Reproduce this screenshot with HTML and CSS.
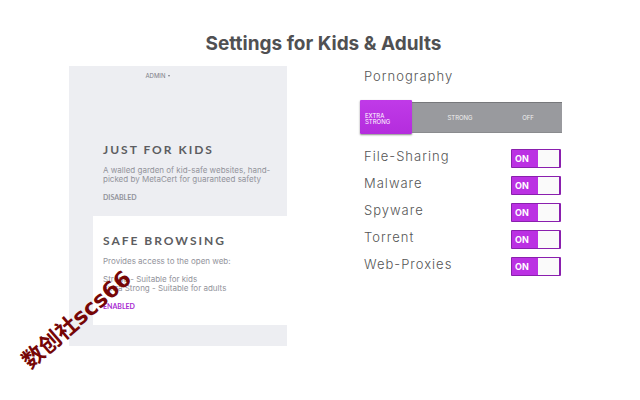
FILE: index.html
```html
<!DOCTYPE html>
<html lang="en">
<head>
  <meta charset="UTF-8">
  <meta name="viewport" content="width=device-width, initial-scale=1">
  <title>Settings for Kids &amp; Adults</title>
  <link rel="stylesheet" href="styles.css">
</head>
<body>

  <h1 class="page-title">Settings for Kids &amp; Adults</h1>

  <main class="columns">
    <section class="panel">
      <button type="button" class="admin">ADMIN <span class="caret"></span></button>

      <div class="mode">
        <h2>JUST FOR KIDS</h2>
        <p>A walled garden of kid-safe websites, hand-<br>picked by MetaCert for guaranteed safety</p>
        <p class="status">DISABLED</p>
      </div>

      <div class="mode active">
        <h2>SAFE BROWSING</h2>
        <p>Provides access to the open web:</p>
        <p>Strong - Suitable for kids<br>Extra Strong - Suitable for adults</p>
        <p class="status">ENABLED</p>
      </div>
    </section>

    <section class="filters">
      <h3>Pornography</h3>
      <div class="levels">
        <button type="button" class="level selected">EXTRA<br>STRONG</button>
        <button type="button" class="level strong">STRONG</button>
        <button type="button" class="level">OFF</button>
      </div>

      <div class="row">
        <label for="sharing">File-Sharing</label>
        <span class="switch"><input type="checkbox" id="sharing" checked><span>ON</span></span>
      </div>
      <div class="row">
        <label for="malware">Malware</label>
        <span class="switch"><input type="checkbox" id="malware" checked><span>ON</span></span>
      </div>
      <div class="row">
        <label for="spyware">Spyware</label>
        <span class="switch"><input type="checkbox" id="spyware" checked><span>ON</span></span>
      </div>
      <div class="row">
        <label for="torrent">Torrent</label>
        <span class="switch"><input type="checkbox" id="torrent" checked><span>ON</span></span>
      </div>
      <div class="row">
        <label for="proxies">Web-Proxies</label>
        <span class="switch"><input type="checkbox" id="proxies" checked><span>ON</span></span>
      </div>
    </section>
  </main>

  <div class="watermark">数创社scs66</div>

</body>
</html>
```
FILE: styles.css
```css
* {
  margin: 0;
  padding: 0;
  box-sizing: border-box;
}

body {
  position: relative;
  min-height: 100vh;
  padding: 30px 78px 0 69px;
  background: #fff;
  font-family: Lato, sans-serif;
}

button {
  border: none;
  background: none;
  cursor: pointer;
}

.page-title {
  padding-left: 16px;
  font: bold 19px/28px Inter, sans-serif;
  color: #505052;
  text-align: center;
}

.columns {
  display: grid;
  grid-template-columns: 218fr 202fr;
  column-gap: 73px;
  align-items: start;
  margin-top: 8px;
}

/* left panel */
.panel {
  padding-bottom: 21px;
  background: #edeef2;
}

.admin {
  display: flex;
  align-items: center;
  gap: 2px;
  margin: 6px auto 0;
  padding-right: 41px;
  font: 6px/8px Inter, sans-serif;
  color: #7b7c86;
}

.caret {
  border: 1px solid transparent;
  border-top: 2px solid #7b7c86;
  border-bottom: none;
}

.mode {
  margin-left: 24px;
  padding: 62px 0 14px 10px;
  white-space: nowrap;
}

.mode h2 {
  margin-bottom: 8px;
  font-size: 12px;
  line-height: 16px;
  letter-spacing: 2px;
  color: #5c5d61;
}

.mode p {
  margin-bottom: 9px;
  font: 8px/9px Inter, sans-serif;
  color: #92939b;
}

.mode .status {
  margin-bottom: 0;
  font: bold 7px/9px Lato, sans-serif;
}

.mode.active {
  padding-top: 17px;
  background: #fff;
}

.active .status {
  color: #a82bd2;
}

/* right column */
.filters h3 {
  padding-left: 4px;
  font: 300 13px/20px Inter, sans-serif;
  letter-spacing: 1px;
  color: #555;
}

.levels {
  display: grid;
  grid-template-columns: 52fr 82fr 68fr;
  height: 31px;
  margin: 16px 0 12px;
  background: #999a9e;
  border-top: 1px solid #77787b;
  border-bottom: 1px solid #8a8b8e;
}

.level {
  font: 6px/6px Inter, sans-serif;
  color: #f0f0f0;
}

.level.strong {
  padding-left: 14px;
}

.level.selected {
  margin: -3px 0 -2px;
  padding: 4px 5px 0;
  background: linear-gradient(#c03ae8, #b42ddd);
  border-radius: 1px;
  box-shadow: 0 1px 2px #888;
  color: #fff;
  text-align: left;
}

.row {
  display: flex;
  align-items: center;
  justify-content: space-between;
  height: 27px;
  padding: 0 1px 0 4px;
}

.row label {
  padding-bottom: 5px;
  font: 300 13px/18px Inter, sans-serif;
  letter-spacing: 1px;
  color: #555;
}

.switch {
  position: relative;
  width: 50px;
  height: 19px;
}

.switch input {
  appearance: none;
  display: block;
  width: 100%;
  height: 100%;
  background: linear-gradient(#fafafa, #fafafa) right / 21px 100% no-repeat #bb31e3;
  border: 1px solid #8a1fae;
  border-right-width: 2px;
  border-radius: 1px;
  cursor: pointer;
}

.switch span {
  position: absolute;
  top: 5px;
  left: 4px;
  font: bold 9px/10px Inter, sans-serif;
  color: #fff;
  pointer-events: none;
}

.watermark {
  position: absolute;
  top: 304px;
  left: 9px;
  font: bold 22px/32px "DejaVu Sans", "Noto Sans CJK SC", sans-serif;
  color: #760606;
  white-space: nowrap;
  transform: rotate(-41deg);
  pointer-events: none;
}
```
